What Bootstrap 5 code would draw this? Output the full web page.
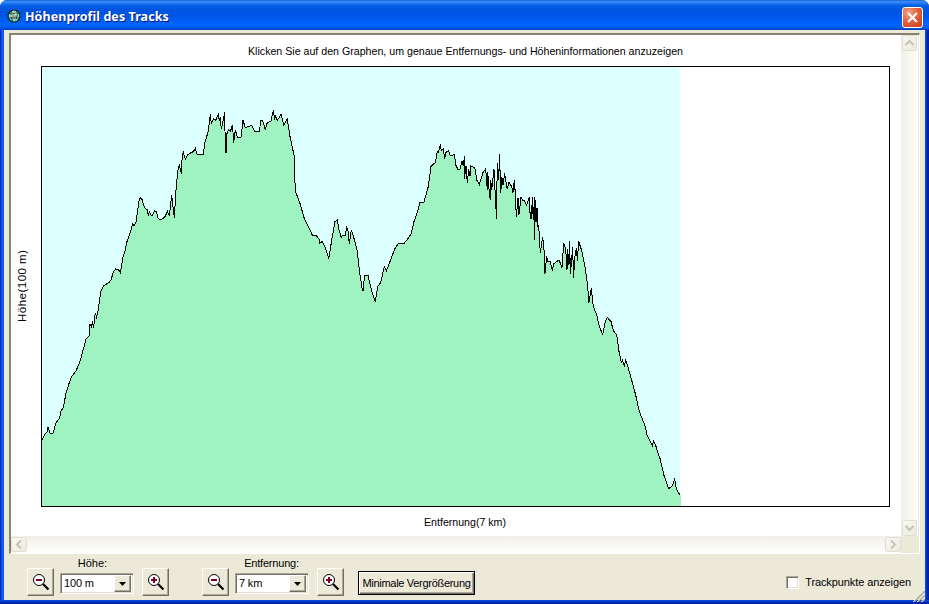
<!DOCTYPE html>
<html lang="de">
<head>
<meta charset="utf-8">
<title>Höhenprofil des Tracks</title>
<link rel="stylesheet" href="https://cdn.jsdelivr.net/npm/bootstrap@5.3.0/dist/css/bootstrap.min.css">
<style>
body{width:929px;height:604px;overflow:hidden;background:#fff;font:11px/13px "Liberation Sans",Arial,sans-serif;color:#000}
svg{display:block}
.win{width:929px;height:604px;padding:0 4px;border-radius:7px 7px 0 0;background:linear-gradient(transparent 600px,#0831d9 600px,#0855dd 601px,#0029b5 602px,#001ea0 604px),linear-gradient(90deg,#0019cf 0,#0831d9 1px,#166aee 2px,#0855dd 4px,#0855dd 925px,#0441d8 926px,#0029b5 927px,#001ea0 929px);overflow:hidden}
.titlebar{height:30px;margin:0 -4px;padding:3px 6px 0 7px;background:linear-gradient(#0a50c8 0,#3a8cfc 1px,#2a7ff5 3px,#0862e8 5px,#0055e0 9px,#0054e3 14px,#005af0 19px,#0066fe 25px,#0060f5 27px,#0048d0 29px,#0040c0 30px)}
.titlebar h1{font:bold 12.5px/20px "Noto Sans",sans-serif;color:#fff;text-shadow:1px 1px 0 #0a1883;white-space:nowrap;margin:4px 0 0 4px;letter-spacing:.06px}
.emblem{margin-top:6px}
.closer{width:21px;height:21px;border:1px solid #fff;border-radius:3px;padding:0;background:radial-gradient(circle at 30% 25%,#f0a088 0,#e4633d 45%,#c93a11 100%)}
.client{height:570px;background:#ece9d8;padding:3px 5px 0}
.pane{width:911px;height:521px;border:solid;border-width:2px 1px 1px 2px;border-color:#85826f #fff #fff #85826f;background:#ece9d8;display:grid;grid-template:501px 17px/890px 17px}
.vbar{background:linear-gradient(90deg,#f1efe8,#fefefb)}
.hbar{background:linear-gradient(#f1efe8,#fefefb)}
.arrow{width:15px;height:16px;border:1px solid #e0dfd3;border-radius:2px;background:linear-gradient(135deg,#f8f8f3,#eceade);margin:0 0 0 1px}
.hbar .arrow{margin:1px 0 0;width:16px;height:15px}
.footer-bar{height:46px;margin-top:2px}
.zoomer{display:grid;grid-template:12px 28px/27px 74px 27px;column-gap:7px;width:142px;height:40px;margin-left:18px}
.zoomer+.zoomer{margin-left:33px}
.zoomer label{grid-column:1/4;text-align:center;padding-right:11px;line-height:15px}
.zoomer+.zoomer label{padding-right:3px;letter-spacing:-.2px}
.face{background:#ece9d8;border:1px solid;border-color:#fff #716f64 #716f64 #fff;box-shadow:inset -1px -1px #aca899;padding:0;color:#000}
.combo{height:21px;margin:5px 1px 0 -1px;border:1px solid;border-color:#aca899 #fff #fff #aca899;box-shadow:inset 1px 1px #716f64,inset -1px -1px #e3dfd0;background:#fff;padding:2px 2px 2px 3px;letter-spacing:-.15px}
.combo .face{width:17px;height:17px}
.minbtn{width:117px;height:24px;margin:15px 0 0 14px;border:1px solid #000;box-shadow:inset 1px 1px #fff,inset -1px -1px #716f64,inset -2px -2px #aca899;background:#ece9d8;padding:0;color:#000;white-space:nowrap;line-height:20px;letter-spacing:-.3px}
.track-option{margin-top:20px;letter-spacing:-.1px}
.box{width:13px;height:13px;margin-right:6px;border:1px solid;border-color:#aca899 #fff #fff #aca899;box-shadow:inset 1px 1px #716f64,inset -1px -1px #e3dfd0;background:#fff}
.grip{margin:0 -5px 0 2px}
</style>
<script src="https://cdn.jsdelivr.net/npm/bootstrap@5.3.0/dist/js/bootstrap.bundle.min.js"></script>
</head>
<body>
<svg width="0" height="0" class="position-absolute"><defs>
<g id="glass"><circle cx="6" cy="6" r="5.500" fill="#fff" stroke="#000" stroke-width="1"/><path d="M10 10L15.500 15.500" stroke="#000" stroke-width="2.200"/></g>
</defs></svg>
<div class="win">
  <header class="titlebar d-flex align-items-start">
    <svg class="emblem" width="14" height="14" viewBox="0 0 14 14"><circle cx="7" cy="7" r="6" fill="#7adcc8" stroke="#10201c" stroke-width="1.200"/><path d="M2 4.500h10M1.500 9h11M4.500 2q-2 5 1 10M9.500 2q2 5-1 10" fill="none" stroke="#123c38" stroke-width=".8"/><path d="M4 4l3 1 2-1M6 6v3M7 9l3-2" stroke="#c04038" fill="none"/><path d="M3 7h2M8 5h2M8 11h2" stroke="#d8fff0"/></svg>
    <h1>Höhenprofil des Tracks</h1>
    <button class="closer ms-auto mt-1" aria-label="Schließen"><svg width="19" height="19"><path d="M5 5l9 9M14 5l-9 9" stroke="#fff" stroke-width="2.200"/></svg></button>
  </header>
  <main class="client">
    <section class="pane">
      <svg width="890" height="501" viewBox="11 35 890 501" font-family="Liberation Sans,Arial,sans-serif" font-size="11.500">
        <rect x="11" y="35" width="890" height="501" fill="#fff"/>
        <text x="248" y="55" textLength="435" lengthAdjust="spacingAndGlyphs">Klicken Sie auf den Graphen, um genaue Entfernungs- und Höheninformationen anzuzeigen</text>
        <rect x="42" y="67" width="638" height="439" fill="#dcffff"/>
        <g shape-rendering="crispEdges">
        <path id="area" fill="#9ef3c0"/>
        <path id="line" fill="none" stroke="#000"/>
        <rect x="41.500" y="66.500" width="848" height="440" fill="none" stroke="#000"/>
        </g>
        <text transform="translate(26 322) rotate(-90)" textLength="72">Höhe(100 m)</text>
        <text x="424" y="526" textLength="82" lengthAdjust="spacingAndGlyphs">Entfernung(7 km)</text>
      </svg>
      <div class="vbar d-flex flex-column justify-content-between">
        <div class="arrow"><svg width="13" height="14"><path d="M2.500 9L6.500 5L10.500 9" fill="none" stroke="#c6c4b6" stroke-width="2"/></svg></div>
        <div class="arrow"><svg width="13" height="14"><path d="M2.500 5L6.500 9L10.500 5" fill="none" stroke="#c6c4b6" stroke-width="2"/></svg></div>
      </div>
      <div class="hbar d-flex justify-content-between">
        <div class="arrow"><svg width="14" height="13"><path d="M9 2.500L5 6.500L9 10.500" fill="none" stroke="#c6c4b6" stroke-width="2"/></svg></div>
        <div class="arrow"><svg width="14" height="13"><path d="M5 2.500L9 6.500L5 10.500" fill="none" stroke="#c6c4b6" stroke-width="2"/></svg></div>
      </div>
    </section>
    <footer class="footer-bar d-flex align-items-start">
      <div class="zoomer">
        <label>Höhe:</label>
        <button class="face" aria-label="Höhe verkleinern"><svg width="25" height="26" viewBox="-5 -5 25 26"><use href="#glass"/><path d="M3 6h6" stroke="#800020" stroke-width="2"/></svg></button>
        <div class="combo d-flex align-items-center"><span class="flex-grow-1">100 m</span><span class="face"><svg width="15" height="15"><path d="M4 6h7l-3.500 4z"/></svg></span></div>
        <button class="face" aria-label="Höhe vergrößern"><svg width="25" height="26" viewBox="-5 -5 25 26"><use href="#glass"/><path d="M3 6h6M6 3v6" stroke="#800020" stroke-width="2"/></svg></button>
      </div>
      <div class="zoomer">
        <label>Entfernung:</label>
        <button class="face" aria-label="Entfernung verkleinern"><svg width="25" height="26" viewBox="-5 -5 25 26"><use href="#glass"/><path d="M3 6h6" stroke="#800020" stroke-width="2"/></svg></button>
        <div class="combo d-flex align-items-center"><span class="flex-grow-1">7 km</span><span class="face"><svg width="15" height="15"><path d="M4 6h7l-3.500 4z"/></svg></span></div>
        <button class="face" aria-label="Entfernung vergrößern"><svg width="25" height="26" viewBox="-5 -5 25 26"><use href="#glass"/><path d="M3 6h6M6 3v6" stroke="#800020" stroke-width="2"/></svg></button>
      </div>
      <button class="minbtn">Minimale Vergrößerung</button>
      <div class="track-option d-flex align-items-center ms-auto"><span class="box"></span><span class="text-nowrap">Trackpunkte anzeigen</span></div>
      <svg class="grip align-self-end" width="12" height="12"><path d="M0 12L12 0M4 12L12 4M8 12L12 8" stroke="#fff"/><path d="M1 12L12 1M5 12L12 5M9 12L12 9" stroke="#a09d8c" stroke-width="1.300"/></svg>
    </footer>
  </main>
</div>
<script>
const profile = "42,440 45,434 47,432 48,427.500 50,433 53,433 56,423 59.500,418 61,411 63.500,407 66,393 69.500,382 72,376 76,371 80.500,360 86,339 89,336 90,324 91.500,327 92.500,321.500 93.500,328 95.300,313 96.500,317 97.700,313 99.300,302 101,291 104,285.500 109,282.500 111,280 113.500,271.500 115.700,269 118.500,269.500 120.500,273 122.700,258 125,251.500 127,241.500 131,230 132.700,224 134,226 136,222.500 137.700,210 139,201 140.300,197.500 142.300,200 144.300,207.500 147.500,210 148.300,216 149.300,212 151,215 152.500,215.500 154.500,211 156.300,211.500 158,218 160.300,220 164.500,217.500 167.500,211.500 169.300,216 171.700,195.500 174.300,218 176,190 177.700,171.500 179.300,165.500 181.300,173.500 182.300,155 183.300,152.500 185.300,159 188,154.500 193.300,151.500 195.300,148.500 197,154 203.500,154.500 204.500,143.500 208.300,131.500 210.300,114.500 211.300,123 213.500,119 215.500,120.500 218.300,114.500 219.300,120.500 220.300,117 221.300,129 223.300,120 224.500,112.500 225,131 225.500,152.500 226.500,152.500 227,133.500 228.700,130 230.500,131 232.500,125 233.700,142.500 235.300,130 237.500,137.500 241,137.500 243,120.500 245.300,127.500 248.700,126.500 251.700,125.500 255,131.500 259.500,131.500 260.700,120 262.500,120 265.300,130 266.700,123.500 271,121 273.300,110.500 274.700,119.500 275.700,116 277.300,120.500 281,114.500 283.700,125 287.300,119 290,136.500 294,155 295.300,191.500 297,195.500 300,203.500 304,217.500 312.300,235 316.300,235.500 319,239 319.700,243.500 322,241.500 325.300,247.500 328.700,258.500 332,238.500 335,221.500 337.300,220 339,230 341.300,237.500 342.500,235.500 345.300,235.500 346.700,226.500 348,231 349.300,243.500 351.300,230 354,238.500 357.300,251 359.300,270 362.300,290 363.300,290 364.500,275.500 368,275.500 371.500,290 375.300,302 377.700,286.500 380.700,282.500 384.300,266.500 386.300,271 390,261.500 394.700,249 398.300,243.500 404,243.500 408,238.500 411.300,233.500 414,221.500 416.700,214.500 420,202.500 424,202 428.300,186.500 431,166.500 435.300,162.500 437.300,151.500 438.500,152.500 440.300,144.500 441.300,150.500 443.300,148.500 444.700,159 445.700,152.500 448.700,150.500 450.300,156 454.300,154.500 456,165.500 458,169.500 460,169 462,161.500 463.300,166 464.500,156.500 464.500,179 466,166 467.300,182.500 468.700,169 470,176 470.700,166 474.700,167.500 477,180.500 479.300,184.500 483.300,171.500 485.700,169 487.300,190 487.700,172 489.300,193 490.300,199.500 490.700,180 491.700,190 494,169.500 495.300,196.500 496.500,218.500 496.700,190 497.700,163.500 498.700,180 499.500,154 500.700,192.500 502,177.500 503,185 504.700,173.500 506.700,186.500 507.300,189 509,182.500 511.700,186.500 513,192.500 514.300,180.500 515.300,193 516.300,216.500 518,198 519,214.500 521,197.500 522.500,200 524,200 526.700,205 529.300,197.500 530.300,218.500 531.500,218.500 532.300,197.500 533.300,220 534.500,197.500 534.500,239.500 535.500,200 536,222 537,208 538,226.500 538.700,225 540.300,252.500 542.700,237 544,250 545,273.500 546.700,256.500 548,261.500 550,261 552.300,270 554,263.500 559,260 562,267.500 563.700,243.500 565.700,248.500 566.500,263 567,270 567.500,249 569,265 569.500,241 570.500,273.500 571.700,258 572.700,247.500 573.500,277.500 575.300,252 576.500,248.500 577.300,260.500 578.700,241.500 582,251.500 585,266.500 587.300,283.500 589,302.500 591.300,288.500 593.300,306.500 596.700,315 599.300,326.500 602.700,334.500 605.300,321.500 607.300,317.500 611,321.500 613.300,330.500 616.700,335 619,351.500 621.300,362.500 622.500,360 624.300,366 625.700,360 629.300,371.500 635.700,395 639.300,411.500 645.300,426.500 647.300,436 651.700,444 652.700,446 653.300,440.500 656,446.500 660,458.500 664,475.500 668.700,488.500 672.300,486 674.700,478.500 676.300,489 679.700,494.500";
document.getElementById("line").setAttribute("d", "M" + profile);
document.getElementById("area").setAttribute("d", "M42,506 L" + profile + " 681,495 681,506Z");
</script>
</body>
</html>
